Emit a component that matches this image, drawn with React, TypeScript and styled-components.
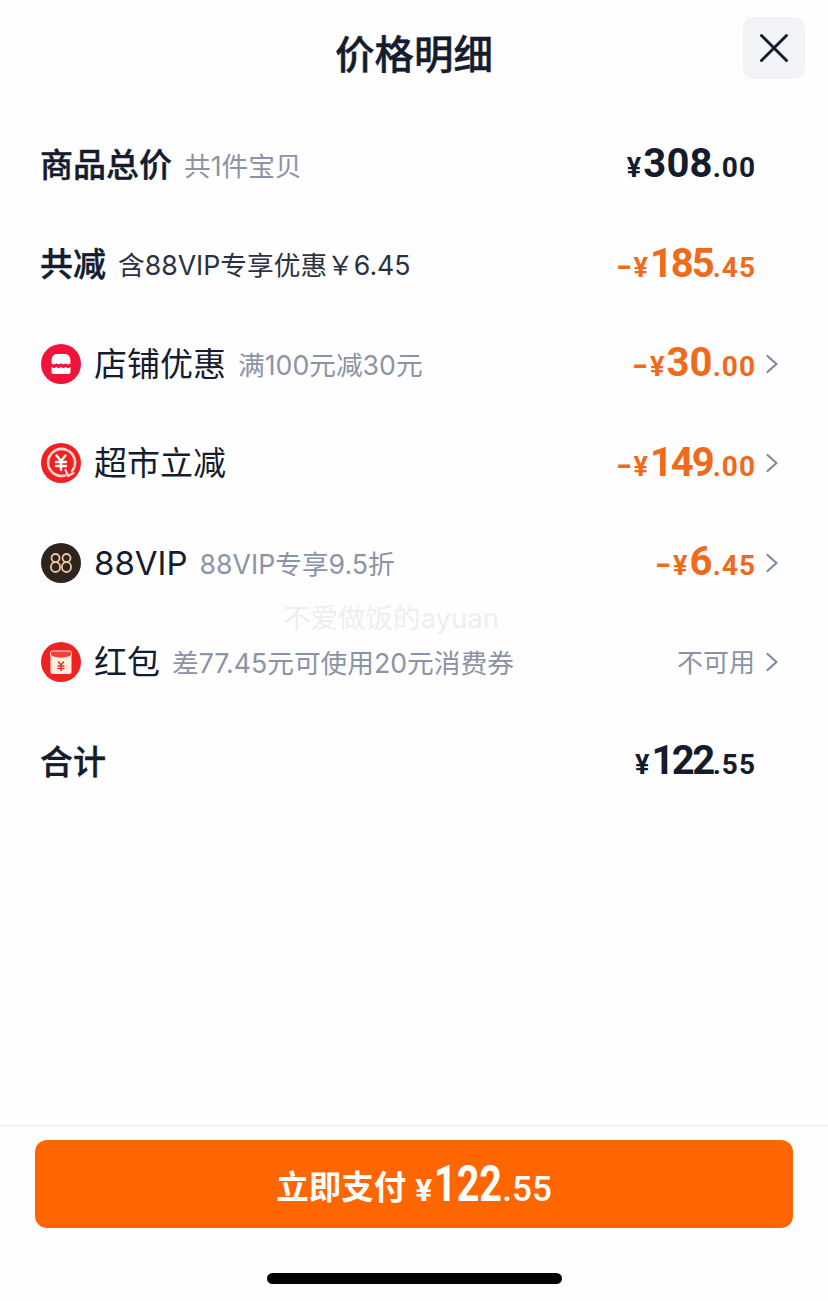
import styled, { createGlobalStyle } from 'styled-components'
import { ReactNode } from 'react'

const cjk = `"Noto Sans CJK SC", "Noto Sans", sans-serif`
const latin = `Inter, "Noto Sans CJK SC", sans-serif`
const digits = `Roboto, "Liberation Sans", sans-serif`

const GlobalStyle = createGlobalStyle`
  html, body { margin: 0; padding: 0; background: #fff; }
  * { box-sizing: border-box; }
`

const Page = styled.div`
  position: relative;
  width: 828px;
  height: 1301px;
  display: flex;
  flex-direction: column;
  background: #fefefe;
  color: #141c2e;
  font-family: ${cjk};
  overflow: hidden;
`

const Header = styled.header`
  height: 115px;
  display: grid;
  grid-template-columns: 62px 1fr 62px;
  padding: 17px 23px 0 23px;
  align-items: start;
`

const Title = styled.h1`
  grid-column: 2;
  margin: 0;
  height: 70px;
  line-height: 70px;
  text-align: center;
  font-size: 39.5px;
  font-weight: 500;
  -webkit-text-stroke: 0.4px #141c2e;
`

const CloseButton = styled.button`
  grid-column: 3;
  width: 62px;
  height: 62px;
  padding: 0;
  border: 0;
  border-radius: 10px;
  background: #f1f3f6;
  display: flex;
  align-items: center;
  justify-content: center;
`

const Rows = styled.div`
  flex: 1;
  display: flex;
  flex-direction: column;
`

const Row = styled.div`
  height: 99.5px;
  padding: 0 73px 0 41px;
  display: flex;
  align-items: center;
`

const Badge = styled.svg`
  width: 40px;
  height: 40px;
  margin-right: 13px;
  flex: none;
`

const Label = styled.span<{ $strong?: boolean }>`
  font-family: ${latin};
  font-size: 33px;
  line-height: 40px;
  font-weight: ${p => (p.$strong ? 500 : 400)};
  margin-left: ${p => (p.$strong ? -1 : 0)}px;
  -webkit-text-stroke: ${p => (p.$strong ? '0.4px #141c2e' : '0')};
  white-space: nowrap;
`

const Note = styled.span<{ $dark?: boolean }>`
  margin-left: 12px;
  padding-top: 2px;
  font-family: ${latin};
  font-size: 26.7px;
  line-height: 36px;
  color: ${p => (p.$dark ? '#2a3242' : '#8a94a6')};
  white-space: nowrap;
`

const Right = styled.div`
  margin-left: auto;
  position: relative;
  display: flex;
  align-items: center;
`

const Amount = styled.span<{ $orange?: boolean }>`
  display: inline-flex;
  align-items: baseline;
  padding-top: 3px;
  font-family: ${digits};
  font-weight: 700;
  color: ${p => (p.$orange ? '#f06a1c' : '#141c2e')};
`

const Minus = styled.span`
  display: inline-block;
  font-size: 32px;
  line-height: 44px;
  margin: 0 3px 0 1px;
  transform: scaleX(1.35);
`

const Sign = styled.span`
  font-size: 27px;
  line-height: 44px;
  margin-right: 2px;
`

const Whole = styled.span<{ $tight?: number }>`
  font-size: 40px;
  line-height: 44px;
  letter-spacing: ${p => p.$tight ?? 0.2}px;
`

const Cents = styled.span`
  font-size: 28px;
  line-height: 44px;
  font-weight: 700;
  letter-spacing: 1px;
  margin-right: -1px;
`

const Chevron = styled.svg`
  position: absolute;
  left: calc(100% + 10px);
  top: 50%;
  width: 14px;
  height: 20px;
  margin-top: -10px;
`

const Unavailable = styled.span`
  padding-bottom: 3px;
  font-size: 26px;
  line-height: 36px;
  color: #8a94a6;
`

const Watermark = styled.div`
  position: absolute;
  left: 283px;
  top: 600px;
  font-family: ${latin};
  font-size: 27.5px;
  line-height: 36px;
  color: rgba(214, 218, 226, 0.45);
  pointer-events: none;
`

const Footer = styled.footer`
  height: 176px;
  border-top: 1px solid #e6e7ea;
  padding: 14px 35px 0;
  display: flex;
  flex-direction: column;
  align-items: center;
`

const PayButton = styled.button`
  width: 758px;
  height: 88px;
  border: 0;
  border-radius: 12px;
  background: #ff6600;
  color: #fff;
  font-family: ${cjk};
  font-size: 32.5px;
  font-weight: 700;
  display: flex;
  align-items: center;
  justify-content: center;
`

const PayPrice = styled.span`
  display: inline-flex;
  align-items: baseline;
  margin-left: 9px;
  font-family: ${digits};
  font-weight: 700;
`

const PaySign = styled.span`
  font-size: 32px;
  margin-right: 2px;
`

const PayWhole = styled.span`
  display: inline-block;
  font-size: 50px;
  margin: 0 -9px;
  transform: scaleX(0.79);
`

const PayCents = styled.span`
  font-size: 35px;
  font-weight: 500;
`

const HomeBar = styled.div`
  width: 295px;
  height: 11px;
  margin-top: 45px;
  border-radius: 6px;
  background: #000;
`

const Price = ({ whole, cents, minus, tight }: { whole: string; cents: string; minus?: boolean; tight?: number }) => (
  <Amount $orange={minus}>
    {minus && <Minus>-</Minus>}
    <Sign>¥</Sign>
    <Whole $tight={tight}>{whole}</Whole>
    <Cents>.{cents}</Cents>
  </Amount>
)

const More = () => (
  <Chevron viewBox="0 0 14 20" fill="none" stroke="#7f8a9e" strokeWidth="2.2" strokeLinecap="round" strokeLinejoin="round">
    <path d="M2.5 2l9 8-9 8" />
  </Chevron>
)

const ShopIcon = () => (
  <Badge viewBox="0 0 40 40">
    <circle cx="20" cy="20" r="20" fill="#f0143c" />
    <path d="M10.500 17c0-4.500 2.500-7 5.500-7h8c3 0 5.500 2.500 5.500 7v2.500c-2 1.200-3.400 1.200-4.800-.3-1.500 1.500-3.100 1.500-4.700 0-1.600 1.500-3.200 1.500-4.700 0-1.400 1.500-2.800 1.500-4.800.3z" fill="#fff" />
    <path d="M10.500 23c2 1.300 3.200 1.300 4.800 0 1.600 1.300 3.100 1.300 4.700 0 1.600 1.300 3.100 1.300 4.700 0 1.600 1.300 2.800 1.300 4.800 0v5c0 1.200-.8 2-2 2h-15c-1.200 0-2-.8-2-2z" fill="#fff" />
  </Badge>
)

const RebateIcon = () => (
  <Badge viewBox="0 0 40 40">
    <circle cx="20" cy="20" r="20" fill="#ee2223" />
    <path d="M31 28A13.500 13.500 0 1 0 24 32.500" fill="none" stroke="#fbd5d0" strokeWidth="2.600" strokeLinecap="round" />
    <path d="M24.500 27l2.500 6 5.500-3" fill="none" stroke="#fbd5d0" strokeWidth="2.200" strokeLinecap="round" strokeLinejoin="round" />
    <path d="M15.500 12.500l4.500 5.500 4.500-5.500M15 19h10M15 23h10M20 18v9" fill="none" stroke="#fff" strokeWidth="2.400" strokeLinecap="round" strokeLinejoin="round" />
  </Badge>
)

const VipIcon = () => (
  <Badge viewBox="0 0 40 40">
    <circle cx="20" cy="20" r="20" fill="#2e231e" />
    <g fill="none" stroke="#e8c6a0" strokeWidth="1.800">
      <rect x="10.500" y="11" width="8" height="8" rx="4" />
      <rect x="10" y="19" width="9" height="10" rx="4.500" />
      <rect x="21.500" y="11" width="8" height="8" rx="4" />
      <rect x="21" y="19" width="9" height="10" rx="4.500" />
    </g>
  </Badge>
)

const PacketIcon = () => (
  <Badge viewBox="0 0 40 40">
    <circle cx="20" cy="20" r="20" fill="#ee2223" />
    <rect x="9.500" y="9" width="21" height="23" rx="2" fill="#fdeedd" />
    <path d="M9.500 11c0-1.200.8-2 2-2h17c1.200 0 2 .8 2 2v2.500c-6 3.500-15 3.500-21 0z" fill="#f4403a" stroke="#fdeedd" strokeWidth="1" />
    <path d="M17.500 20l2.500 3 2.500-3M17 24h6M17 26.500h6M20 23v5.500" fill="none" stroke="#e0322e" strokeWidth="1.400" strokeLinecap="round" />
  </Badge>
)

const DetailRow = ({ children, right, more }: { children: ReactNode; right: ReactNode; more?: boolean }) => (
  <Row>
    {children}
    <Right>
      {right}
      {more && <More />}
    </Right>
  </Row>
)

export default function App() {
  return (
    <Page>
      <GlobalStyle />
      <Header>
        <Title>价格明细</Title>
        <CloseButton aria-label="关闭">
          <svg width="30" height="30" viewBox="0 0 30 30" fill="none" stroke="#141c2e" strokeWidth="3" strokeLinecap="round">
            <path d="M2.500 2.500l25 25M27.500 2.500l-25 25" />
          </svg>
        </CloseButton>
      </Header>
      <Rows>
        <DetailRow right={<Price whole="308" cents="00" />}>
          <Label $strong>商品总价</Label>
          <Note>共1件宝贝</Note>
        </DetailRow>
        <DetailRow right={<Price minus whole="185" cents="45" tight={-2} />}>
          <Label $strong>共减</Label>
          <Note $dark>含88VIP专享优惠￥6.45</Note>
        </DetailRow>
        <DetailRow more right={<Price minus whole="30" cents="00" />}>
          <ShopIcon />
          <Label>店铺优惠</Label>
          <Note>满100元减30元</Note>
        </DetailRow>
        <DetailRow more right={<Price minus whole="149" cents="00" tight={-2} />}>
          <RebateIcon />
          <Label>超市立减</Label>
        </DetailRow>
        <DetailRow more right={<Price minus whole="6" cents="45" />}>
          <VipIcon />
          <Label>88VIP</Label>
          <Note>88VIP专享9.5折</Note>
        </DetailRow>
        <DetailRow more right={<Unavailable>不可用</Unavailable>}>
          <PacketIcon />
          <Label>红包</Label>
          <Note>差77.45元可使用20元消费券</Note>
        </DetailRow>
        <DetailRow right={<Price whole="122" cents="55" tight={-2.5} />}>
          <Label $strong>合计</Label>
        </DetailRow>
      </Rows>
      <Watermark>不爱做饭的ayuan</Watermark>
      <Footer>
        <PayButton>
          立即支付
          <PayPrice>
            <PaySign>¥</PaySign>
            <PayWhole>122</PayWhole>
            <PayCents>.55</PayCents>
          </PayPrice>
        </PayButton>
        <HomeBar />
      </Footer>
    </Page>
  )
}
